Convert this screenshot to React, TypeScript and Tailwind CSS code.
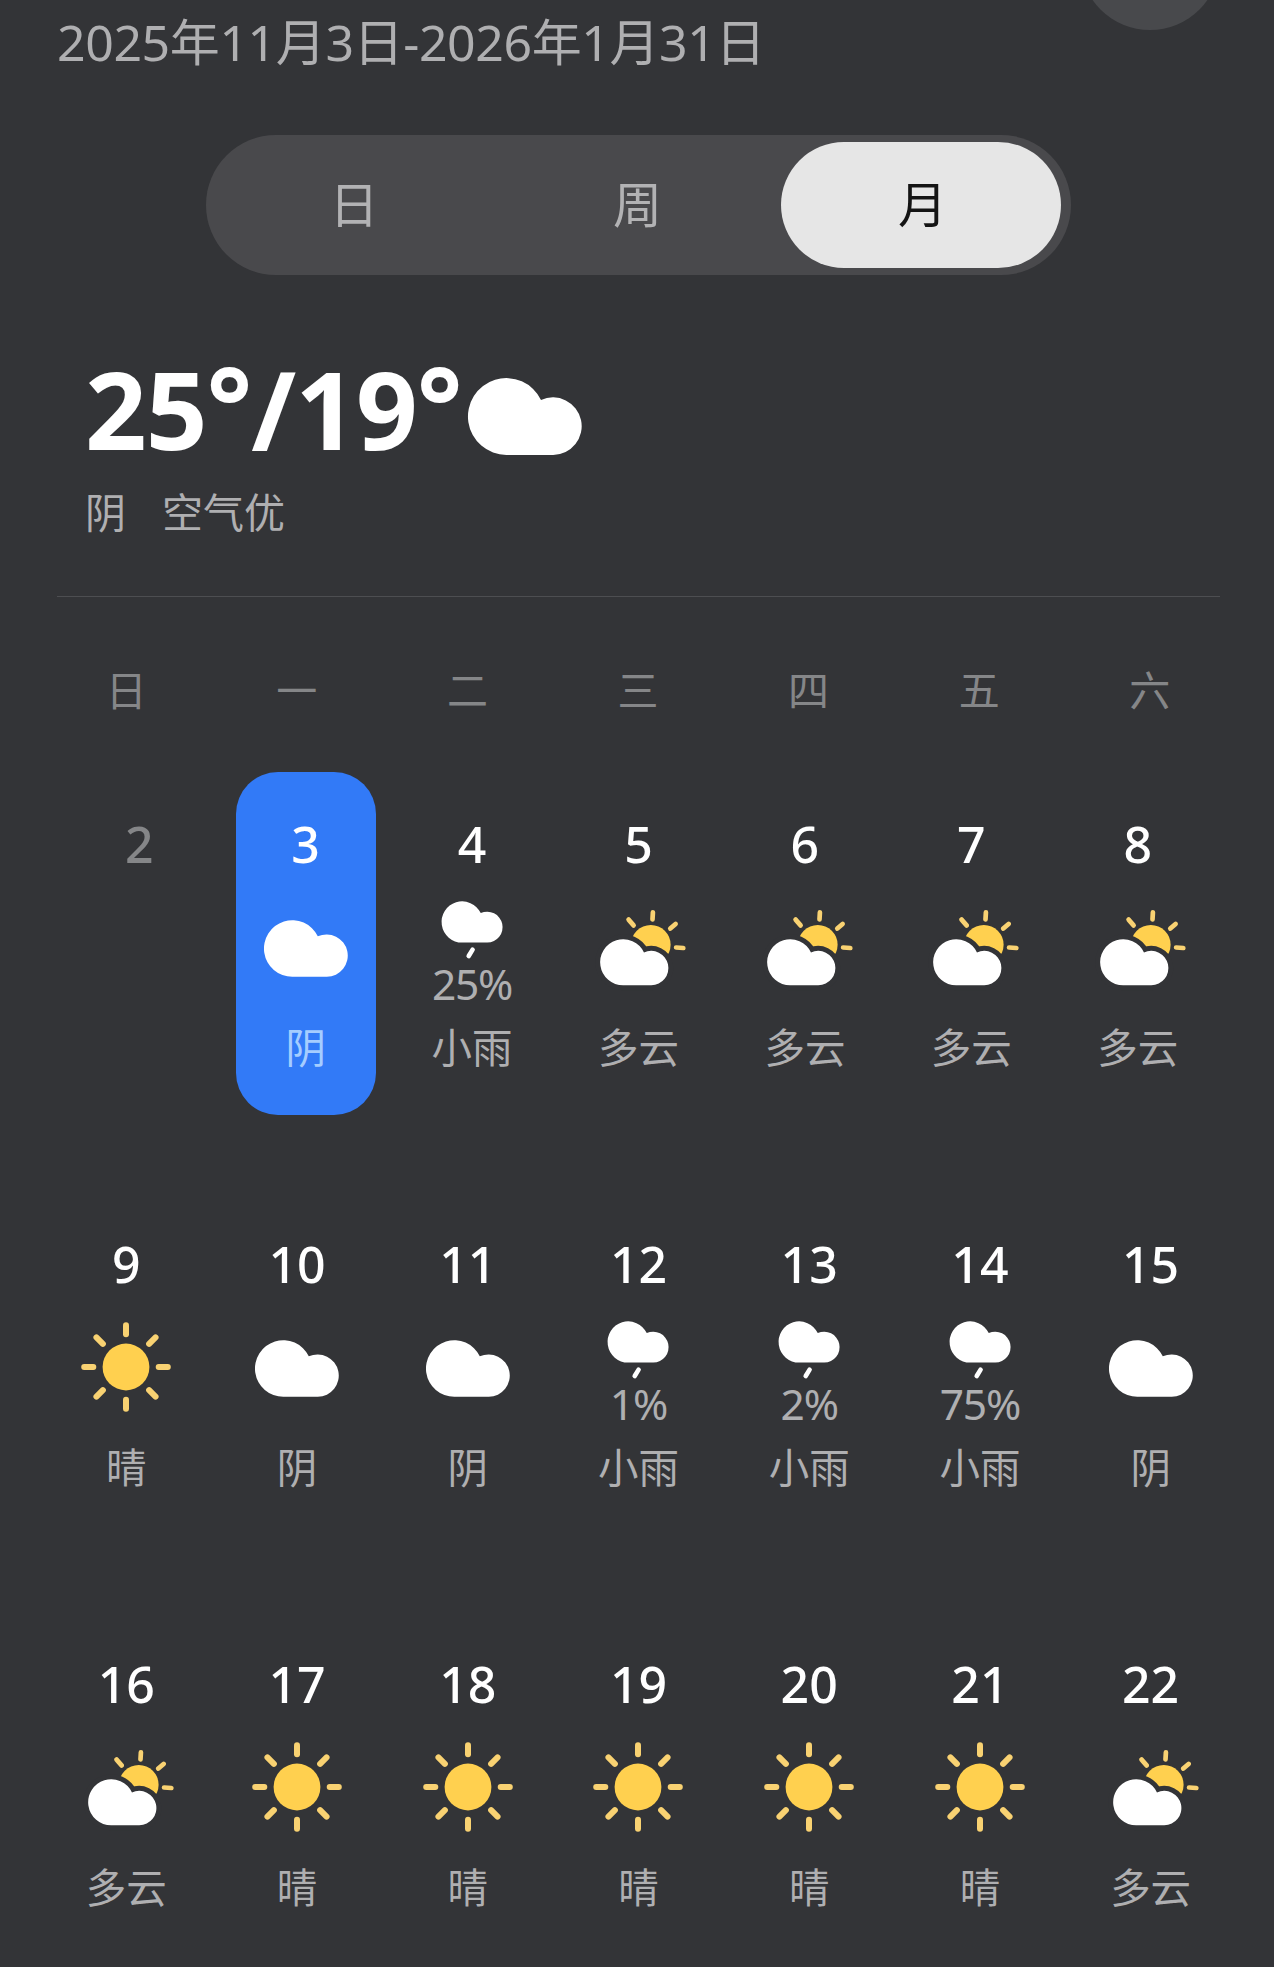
import clsx from 'clsx'

type Weather = 'cloudy' | 'sunny' | 'partly' | 'rain'

interface Day {
  date: number
  weather?: Weather
  rain?: string
}

const LABEL: Record<Weather, string> = {
  cloudy: '阴',
  sunny: '晴',
  partly: '多云',
  rain: '小雨',
}

const TABS = ['日', '周', '月']
const WEEKDAYS = ['日', '一', '二', '三', '四', '五', '六']

const WEEKS: Day[][] = [
  [
    { date: 2 },
    { date: 3, weather: 'cloudy' },
    { date: 4, weather: 'rain', rain: '25%' },
    { date: 5, weather: 'partly' },
    { date: 6, weather: 'partly' },
    { date: 7, weather: 'partly' },
    { date: 8, weather: 'partly' },
  ],
  [
    { date: 9, weather: 'sunny' },
    { date: 10, weather: 'cloudy' },
    { date: 11, weather: 'cloudy' },
    { date: 12, weather: 'rain', rain: '1%' },
    { date: 13, weather: 'rain', rain: '2%' },
    { date: 14, weather: 'rain', rain: '75%' },
    { date: 15, weather: 'cloudy' },
  ],
  [
    { date: 16, weather: 'partly' },
    { date: 17, weather: 'sunny' },
    { date: 18, weather: 'sunny' },
    { date: 19, weather: 'sunny' },
    { date: 20, weather: 'sunny' },
    { date: 21, weather: 'sunny' },
    { date: 22, weather: 'partly' },
  ],
]

const CLOUD = 'M28.3 56.6A28.3 28.3 0 1 1 53.8 16.1A21.2 21.2 0 1 1 62.8 56.6Z'

function WeatherIcon({ weather }: { weather: Weather }) {
  if (weather === 'sunny') {
    return (
      <svg viewBox="0 0 90 90" className="w-[90px] h-[90px] overflow-visible">
        <circle cx="45" cy="45" r="23.4" fill="#ffd04f" />
        {[0, 45, 90, 135, 180, 225, 270, 315].map((a) => (
          <path key={a} d="M45 3.2V12.3" transform={`rotate(${a} 45 45)`} stroke="#f9d272" strokeWidth="6" strokeLinecap="round" />
        ))}
      </svg>
    )
  }

  if (weather === 'partly') {
    return (
      <svg viewBox="0 0 90 90" className="w-[90px] h-[90px] overflow-visible">
        <circle cx="57.8" cy="42.7" r="19.8" fill="#ffd04f" />
        <path d="M59.9 10.3L59.5 17.4M35.6 17.6L40.6 23.4M82.6 21.9L77.3 26.6M83.1 45.5L90.3 46" stroke="#f9d272" strokeWidth="4.7" strokeLinecap="round" />
        <path d={CLOUD} transform="translate(7.2 37.3) scale(.814)" fill="#fff" stroke="#333437" strokeWidth="12" paintOrder="stroke" />
      </svg>
    )
  }

  if (weather === 'rain') {
    return (
      <svg viewBox="0 0 90 60" className="w-[90px] h-[60px] overflow-visible">
        <path d={CLOUD} transform="translate(14.6 -.6) scale(.728)" fill="#fff" />
        <path d="M45.6 47.6L41.7 54" stroke="#fff" strokeWidth="4.6" strokeLinecap="round" />
      </svg>
    )
  }

  return (
    <svg viewBox="0 0 90 90" className="w-[90px] h-[90px]">
      <path d={CLOUD} transform="translate(3 18.2)" fill="#fff" />
    </svg>
  )
}

function DayCell({ day, selected }: { day: Day; selected: boolean }) {
  return (
    <div
      className={clsx(
        'w-[140px] h-[343px] pt-[44px] rounded-[42px] flex flex-col items-center',
        selected && 'bg-[#327af7]'
      )}
    >
      <span className={clsx('text-[50px] leading-[56px] font-medium', day.weather ? 'text-white' : 'text-[#858688]')}>{day.date}</span>
      {day.weather && (
        <>
          <div className="mt-[30px] h-[104px] flex flex-col items-center">
            <WeatherIcon weather={day.weather} />
            {day.rain && <span className="text-[42.5px] leading-[43px] tracking-[-1.2px] text-[#afafb1]">{day.rain}</span>}
          </div>
          <span className={clsx('mt-[14px] text-[40.5px] leading-[56px]', selected ? 'text-[#a5cdff]' : 'text-[#afafb1]')}>
            {LABEL[day.weather]}
          </span>
        </>
      )}
    </div>
  )
}

export default function App() {
  return (
    <main className="w-[1274px] h-[1967px] overflow-hidden bg-[#333437] font-['Noto_Sans','Noto_Sans_CJK_SC',sans-serif] whitespace-nowrap">
      <header className="h-[135px] pl-[57px] pr-[54px] flex justify-between items-start">
        <h1 className="pt-[12px] text-[50px] leading-[60px] tracking-[-0.4px] text-[#afafb1]">2025年11月3日-2026年1月31日</h1>
        <div className="w-[140px] h-[140px] -mt-[110px] rounded-full bg-[#48494c]" />
      </header>

      <nav className="ml-[206px] w-[865px] h-[140px] pl-[8px] pr-[10px] rounded-full bg-[#49494c] flex items-center justify-between">
        {TABS.map((t) => (
          <button
            key={t}
            className={clsx(
              'w-[280px] h-[126px] pb-[3px] rounded-full text-[49px] leading-[60px]',
              t === '月' ? 'pl-[3px] bg-[#e6e6e6] text-[#141414]' : 'text-[#b2b2b4]'
            )}
          >
            {t}
          </button>
        ))}
      </nav>

      <section className="ml-[57px] w-[1163px] h-[322px] pl-[28px] pt-[74px] border-b border-[#4d4e51]">
        <div className="flex items-start">
          <span className="w-[383px] text-[108px] leading-[120px] tracking-[-1px] font-bold text-white">
            25<span className="inline-block -translate-y-[5px]">°</span>/19<span className="inline-block -translate-y-[5px]">°</span>
          </span>
          <svg viewBox="0 0 84 56.6" className="mt-[29px] w-[114px] h-[77px] overflow-visible">
            <path d={CLOUD} fill="#fff" />
          </svg>
        </div>
        <div className="mt-[15px] flex gap-[36px] text-[41px] leading-[56px] text-[#afafb1]">
          <span>阴</span>
          <span>空气优</span>
        </div>
      </section>

      <div className="ml-[41px] w-[1194px] mt-[65px] grid grid-cols-7 text-center text-[41px] leading-[56px] text-[#858688]">
        {WEEKDAYS.map((d) => (
          <span key={d}>{d}</span>
        ))}
      </div>

      <div className="mt-[54px] flex flex-col gap-[77px]">
        {WEEKS.map((week, i) => (
          <div
            key={i}
            className={clsx('grid grid-cols-7 justify-items-center', i === 0 ? 'ml-[56px] w-[1165px]' : 'ml-[41px] w-[1195px]')}
          >
            {week.map((day) => (
              <DayCell key={day.date} day={day} selected={day.date === 3} />
            ))}
          </div>
        ))}
      </div>
    </main>
  )
}
